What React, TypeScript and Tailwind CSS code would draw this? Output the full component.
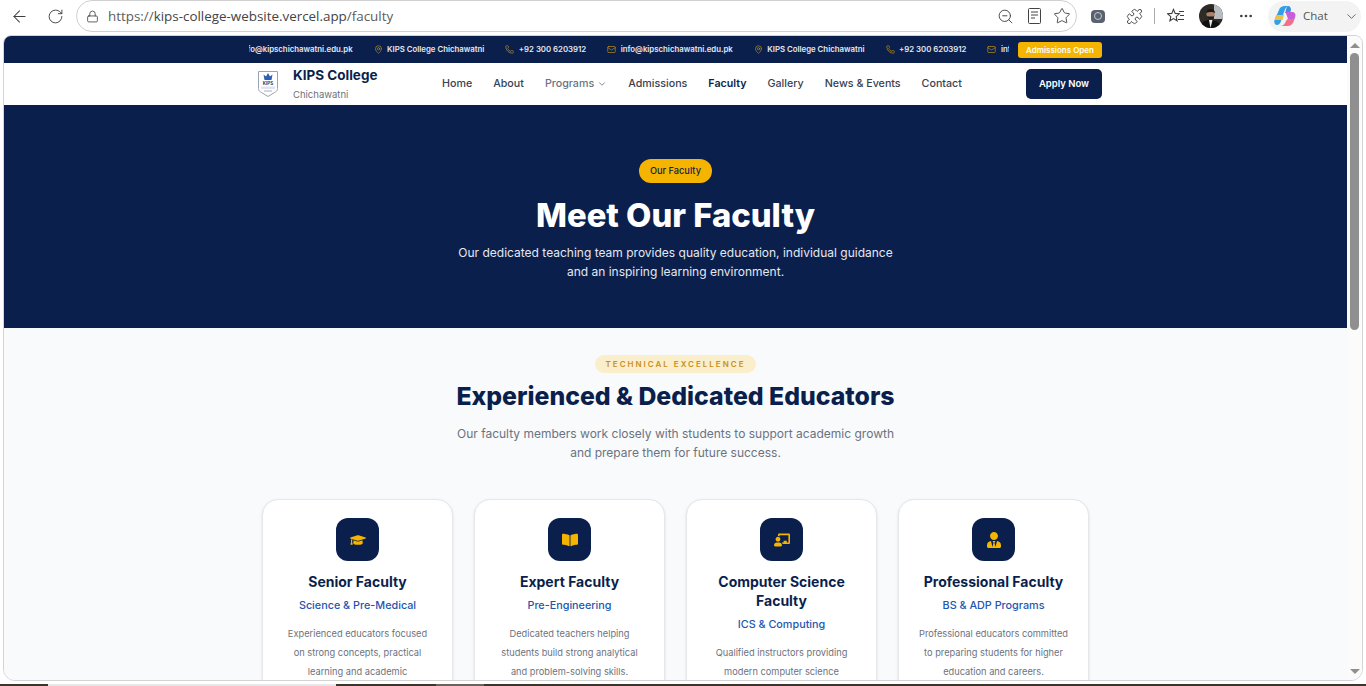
import { ArrowLeft, RotateCw, Lock, ZoomOut, Star, Puzzle, MoreHorizontal, ChevronDown, Mail, MapPin, Phone } from "lucide-react";
import { FaGraduationCap, FaBookOpen, FaChalkboardTeacher, FaUserTie } from "react-icons/fa";

const NAVY = "text-[#0b1f4d]";

function TopItem({ kind, text }: { kind: "mail" | "pin" | "phone"; text: string }) {
  const Icon = kind === "mail" ? Mail : kind === "pin" ? MapPin : Phone;
  return (
    <span className="flex items-center gap-[4.500px] shrink-0 whitespace-nowrap">
      <Icon size={9} className="text-[#f5b400] opacity-70" />
      {text}
    </span>
  );
}

function Shield() {
  return (
    <svg width="22" height="28" viewBox="0 0 22 28" className="shrink-0">
      <path d="M1.500 1.500h19v17c0 2-1 3-3 4l-6.500 4-6.500-4c-2-1-3-2-3-4z" fill="#fff" stroke="#9aa3b5" strokeWidth="1" />
      <path d="M6.500 4.500l2.500 2L11 3l2 3.500 2.500-2-1 5.500h-7z" fill="#2f5fb5" />
      <text x="11" y="15" textAnchor="middle" fontSize="4.500" fontWeight="700" fill="#1d3a75">KIPS</text>
      <rect x="4" y="16.500" width="14" height="2.500" fill="#dfe5f0" />
      <rect x="7" y="20.500" width="8" height="1" fill="#a5aec0" />
    </svg>
  );
}

function FavoritesIcon() {
  return (
    <svg width="18" height="17" viewBox="0 0 18 17" fill="none" stroke="#3f3f3f" strokeWidth="1.100" className="ml-[12px] shrink-0">
      <path d="M6.500 1.500l1.700 3.900 4.100.4-3.100 2.800.9 4.200-3.600-2.200-3.600 2.200.9-4.200L.7 5.800l4.100-.4z" />
      <path d="M12 3.500h5M13 7.500h4M11 11.500h6" />
    </svg>
  );
}

function Avatar() {
  return (
    <svg width="24" height="24" viewBox="0 0 24 24" className="ml-[14px] rounded-full shrink-0">
      <rect width="24" height="24" fill="#2e2a27" />
      <rect x="15" width="9" height="15" fill="#b9bcc0" />
      <path d="M1 24c1-6 5-8 10-8s10 2 11 8z" fill="#101010" />
      <path d="M10 16l1.500 8 2-8z" fill="#e8e8e8" />
      <circle cx="11.500" cy="10" r="4.200" fill="#a9806a" />
      <path d="M7.500 11c1 5 7 5 8 0l-1 1.500h-6z" fill="#1c1511" />
      <path d="M7.200 9c0-5 8.800-5.500 8.800 0-2-1.500-6-1.500-8.800 0z" fill="#1c1511" />
    </svg>
  );
}

function CopilotIcon() {
  return (
    <svg width="22" height="22" viewBox="0 0 22 22" className="shrink-0">
      <path d="M5 5c1-3 3-4 6-4h3c-2 1-3 3-4 6l-3 9c-.5 2-2 4-4 4-2.500 0-3-3-2.500-5z" fill="#2f9fe8" />
      <path d="M.8 14l1.200-4h8l-1.500 5H1z" fill="#e8c24a" />
      <path d="M14 1c2 0 3 2 3 4l-1 3h-5l1-3c.4-2 1-4 2-4z" fill="#3a8fe0" />
      <path d="M11.500 7H18c2.500 0 4 2 3.300 4.500L20.500 14H14z" fill="#c65fd8" />
      <path d="M13.500 14h7c-1 4-3 7-6.500 7H6c3 0 5-2 6-5z" fill="#f0708a" />
    </svg>
  );
}

function Card({ icon, title, sub, lines }: { icon: React.ReactNode; title: string[]; sub: string; lines: string[] }) {
  return (
    <div className="bg-white border border-[#e5e7eb] rounded-2xl h-[260px] flex flex-col items-center pt-[18px] shadow-sm">
      <div className="w-[43px] h-[43px] rounded-xl bg-[#0b1f4d] flex items-center justify-center text-[#f5b400]">{icon}</div>
      <h3 className={`mt-[11px] text-[14px] leading-[19px] font-bold text-center ${NAVY}`}>
        {title.map((t) => (
          <div key={t}>{t}</div>
        ))}
      </h3>
      <p className="mt-[5px] text-[10.800px] leading-[19px] font-medium text-[#1e56b0]">{sub}</p>
      <div className="mt-[9px] text-[9.250px] leading-[19px] text-[#6b7280] text-center">
        {lines.map((l) => (
          <div key={l}>{l}</div>
        ))}
      </div>
    </div>
  );
}

export default function App() {
  return (
    <div className="h-[686px] w-[1366px] overflow-hidden flex flex-col bg-white" style={{ fontFamily: "Inter, sans-serif" }}>
      {/* browser toolbar */}
      <div className="h-[35px] shrink-0 flex items-center pb-[3px] text-[#3f3f3f]">
        <ArrowLeft size={19} strokeWidth={1.300} className="ml-[10px] shrink-0" />
        <RotateCw size={17} strokeWidth={1.300} className="ml-[18px] shrink-0" />
        <div className="ml-[12px] w-[1001px] h-[32px] shrink-0 rounded-full border border-[#d0d0d0] flex items-center pl-[9px]">
          <Lock size={13} strokeWidth={1.500} />
          <span className="ml-[9px] text-[13.400px] text-[#5c5c5c]" style={{ fontFamily: "'Open Sans', sans-serif" }}>
            https://<span className="text-[#444]">kips-college-website.vercel.app</span>/faculty
          </span>
          <ZoomOut size={17} strokeWidth={1.300} className="ml-auto" />
          <svg width="13" height="16" viewBox="0 0 13 16" fill="none" stroke="#444" className="ml-[14px]">
            <rect x="0.500" y="0.500" width="12" height="15" rx="1" />
            <path d="M3 4h7M3 7h7M3 10h4" />
          </svg>
          <Star size={18} strokeWidth={1.200} className="ml-[12px] mr-[5px]" />
        </div>
        <div className="ml-[14px] w-[14px] h-[13px] shrink-0 rounded-sm bg-[#5a6270] flex items-center justify-center">
          <div className="w-[8px] h-[8px] rounded-full border border-[#c8ccd2]" />
        </div>
        <Puzzle size={17} strokeWidth={1.300} className="ml-[21px] shrink-0" />
        <div className="ml-[11px] w-px h-[16px] shrink-0 bg-[#aaa]" />
        <FavoritesIcon />
        <Avatar />
        <MoreHorizontal size={16} className="ml-[15px] shrink-0" />
        <div className="ml-[14px] w-[93px] h-[31px] shrink-0 rounded-full bg-[#f3f3f3] flex items-center pl-[6px]">
          <CopilotIcon />
          <span className="ml-[7px] text-[11.500px] text-[#555]" style={{ fontFamily: "'Open Sans', sans-serif" }}>Chat</span>
          <ChevronDown size={15} strokeWidth={1.200} className="ml-[16px]" />
        </div>
      </div>

      {/* viewport frame */}
      <div className="ml-[3px] mr-[3px] h-[646px] shrink-0 rounded-t-lg rounded-b-xl border border-[#d4d4d4] overflow-hidden flex bg-[#fbfbfb]">
        <div className="w-[1343px] shrink-0 flex flex-col">
          {/* top strip */}
          <div className="h-[27px] shrink-0 bg-[#0b1f4d] flex justify-center">
            <div className="w-[853px] flex items-center">
              <div className="flex-1 overflow-hidden">
                <div className="flex items-center gap-[21px] text-[7.800px] font-semibold text-[#e6e8ee] -ml-[8.500px]">
                  <span className="shrink-0 whitespace-nowrap">info@kipschichawatni.edu.pk</span>
                  <TopItem kind="pin" text="KIPS College Chichawatni" />
                  <TopItem kind="phone" text="+92 300 6203912" />
                  <TopItem kind="mail" text="info@kipschichawatni.edu.pk" />
                  <TopItem kind="pin" text="KIPS College Chichawatni" />
                  <TopItem kind="phone" text="+92 300 6203912" />
                  <TopItem kind="mail" text="info@kipschichawatni.edu.pk" />
                </div>
              </div>
              <span className="ml-[9px] w-[84px] h-[16px] rounded-[3px] bg-[#f5b400] text-white text-[8px] font-semibold flex items-center justify-center shrink-0">
                Admissions Open
              </span>
            </div>
          </div>

          {/* nav */}
          <div className="h-[42px] shrink-0 bg-white flex justify-center">
            <div className="w-[853px] flex items-center pl-[8px]">
              <Shield />
              <div className="ml-[14px] w-[120px]">
                <div className={`-mt-[1px] text-[13.500px] leading-[16px] font-bold ${NAVY}`}>KIPS College</div>
                <div className="mt-[6px] text-[9.500px] leading-[12px] text-[#6b7280]">Chichawatni</div>
              </div>
              <nav className="ml-[29px] flex items-center gap-[21px] text-[10.700px] font-medium text-[#374151]">
                <span>Home</span>
                <span>About</span>
                <span className="flex items-center gap-[3px] text-[#6b7280]">
                  Programs <ChevronDown size={10} />
                </span>
                <span>Admissions</span>
                <span className={`font-semibold ${NAVY}`}>Faculty</span>
                <span>Gallery</span>
                <span>News &amp; Events</span>
                <span>Contact</span>
              </nav>
              <button className="ml-auto w-[76px] h-[30px] rounded-[5px] bg-[#0b1f4d] text-white text-[9.500px] font-semibold">
                Apply Now
              </button>
            </div>
          </div>

          {/* hero */}
          <section className="h-[223px] shrink-0 bg-[#0b1f4d] flex flex-col items-center pt-[54px]">
            <span className="h-[24px] px-[11px] rounded-full bg-[#f5b400] text-[#0b1f4d] text-[9.200px] font-medium flex items-center">
              Our Faculty
            </span>
            <h1 className="mt-[13px] text-[32.800px] leading-[38px] font-extrabold text-white">Meet Our Faculty</h1>
            <p className="mt-[9px] text-[12px] leading-[19px] text-[#e5e8ef] text-center">
              Our dedicated teaching team provides quality education, individual guidance
              <br />
              and an inspiring learning environment.
            </p>
          </section>

          {/* faculty */}
          <section className="flex-1 min-h-0 bg-[#f8fafc] flex flex-col items-center pt-[27px]">
            <span className="shrink-0 h-[18px] px-[10.500px] rounded-full bg-[#fbeecb] text-[#c8901a] text-[8px] font-semibold tracking-[2px] flex items-center">
              TECHNICAL EXCELLENCE
            </span>
            <h2 className={`shrink-0 mt-[5px] text-[24.800px] leading-[37px] font-extrabold ${NAVY}`}>Experienced &amp; Dedicated Educators</h2>
            <p className="shrink-0 mt-[9px] text-[12px] leading-[19px] text-[#6b7280] text-center">
              Our faculty members work closely with students to support academic growth
              <br />
              and prepare them for future success.
            </p>
            <div className="shrink-0 mt-[37px] grid grid-cols-4 gap-[21px] w-[827px]">
              <Card
                icon={<FaGraduationCap size={16} />}
                title={["Senior Faculty"]}
                sub="Science & Pre-Medical"
                lines={["Experienced educators focused", "on strong concepts, practical", "learning and academic"]}
              />
              <Card
                icon={<FaBookOpen size={16} />}
                title={["Expert Faculty"]}
                sub="Pre-Engineering"
                lines={["Dedicated teachers helping", "students build strong analytical", "and problem-solving skills."]}
              />
              <Card
                icon={<FaChalkboardTeacher size={16} />}
                title={["Computer Science", "Faculty"]}
                sub="ICS & Computing"
                lines={["Qualified instructors providing", "modern computer science"]}
              />
              <Card
                icon={<FaUserTie size={16} />}
                title={["Professional Faculty"]}
                sub="BS & ADP Programs"
                lines={["Professional educators committed", "to preparing students for higher", "education and careers."]}
              />
            </div>
          </section>
        </div>

        {/* scrollbar */}
        <div className="flex-1 flex flex-col items-center pt-[7px] pb-[6px] bg-[#fbfbfb]">
          <div className="w-0 h-0 border-l-[5px] border-r-[5px] border-b-[5px] border-l-transparent border-r-transparent border-b-[#8f8f8f]" />
          <div className="mt-[5px] w-[9px] h-[277px] rounded-full bg-[#8f8f8f]" />
          <div className="mt-auto w-0 h-0 border-l-[5px] border-r-[5px] border-t-[5px] border-l-transparent border-r-transparent border-t-[#8f8f8f]" />
        </div>
      </div>

      {/* taskbar edge */}
      <div className="mt-auto h-[2px] flex bg-[#3d352c]">
        <div className="ml-[48px] w-[288px] bg-[#e8e8e8]" />
        <div className="ml-[100px] w-[48px] bg-[#6a645c]" />
      </div>
    </div>
  );
}
